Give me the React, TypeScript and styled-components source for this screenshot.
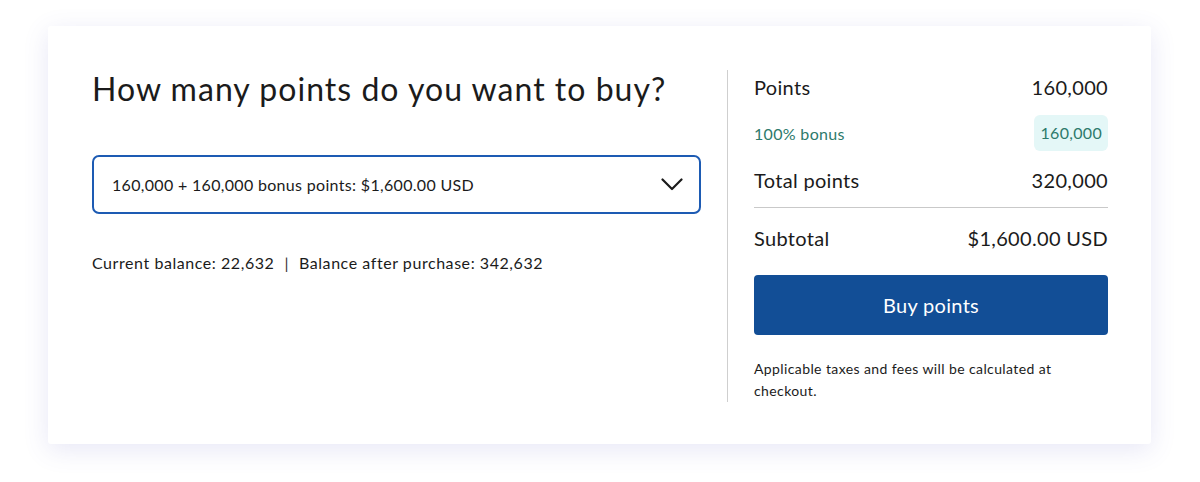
import React from "react";
import styled, { createGlobalStyle } from "styled-components";

const GlobalStyle = createGlobalStyle`
  html, body {
    margin: 0;
    padding: 0;
    background: #ffffff;
  }
  body {
    font-family: Lato, "Open Sans", "Liberation Sans", sans-serif;
    color: #1b1b1b;
    letter-spacing: 0.02em;
  }
`;

const Page = styled.div`
  padding: 26px 49px 38px 48px;
`;

const Card = styled.div`
  display: grid;
  grid-template-columns: 609px 1px 354px;
  column-gap: 26px;
  height: 331px;
  padding: 44px 43px 43px 44px;
  background: #fff;
  border-radius: 3px;
  box-shadow: 0 6px 26px rgba(88, 88, 190, 0.14);
`;

const Left = styled.div`
  display: flex;
  flex-direction: column;
`;

const Heading = styled.h1`
  margin: 0;
  font-size: 32px;
  line-height: 38px;
  font-weight: 400;
  letter-spacing: 0.032em;
  color: #1b1b1b;
`;

const Select = styled.div`
  margin-top: 47px;
  height: 59px;
  box-sizing: border-box;
  border: 2px solid #1d5bb3;
  border-radius: 7px;
  display: flex;
  align-items: center;
  justify-content: space-between;
  padding: 0 16px 0 18px;
  font-size: 16px;
`;

const Balance = styled.div`
  margin-top: 37px;
  font-size: 16px;
  line-height: 24px;
  letter-spacing: 0.035em;
  display: flex;
  gap: 10px;
`;

const Sep = styled.span`
  color: #333;
`;

const Divider = styled.div`
  background: #cfcfcf;
`;

const Right = styled.div`
  display: flex;
  flex-direction: column;
`;

const Row = styled.div<{ $h: number; $mt: number; $small?: boolean }>`
  display: flex;
  align-items: center;
  justify-content: space-between;
  height: ${(p) => p.$h}px;
  margin-top: ${(p) => p.$mt}px;
  font-size: ${(p) => (p.$small ? 16 : 20)}px;
  color: ${(p) => (p.$small ? "#2d7a6b" : "#1b1b1b")};
`;

const Badge = styled.span`
  background: #e4f7f7;
  border-radius: 6px;
  padding: 8px 6px;
  line-height: 20px;
`;

const Rule = styled.div`
  height: 1px;
  background: #c9c9c9;
  margin-top: 10px;
`;

const BuyButton = styled.button`
  margin-top: 20px;
  height: 60px;
  border: none;
  border-radius: 4px;
  background: #124e96;
  color: #fff;
  font-family: inherit;
  letter-spacing: inherit;
  font-size: 20px;
  cursor: pointer;
`;

const Note = styled.p`
  margin: 23px 0 0;
  font-size: 14px;
  line-height: 22px;
  letter-spacing: 0.028em;
  color: #1b1b1b;
`;

export default function App() {
  return (
    <>
      <GlobalStyle />
      <Page>
        <Card>
          <Left>
            <Heading>How many points do you want to buy?</Heading>
            <Select>
              <span>160,000 + 160,000 bonus points: $1,600.00 USD</span>
              <svg width="22" height="13" viewBox="0 0 22 13" fill="none">
                <path d="M1.5 1.5L11 11L20.5 1.5" stroke="#1b1b1b" strokeWidth="2.2" strokeLinecap="round" strokeLinejoin="round" />
              </svg>
            </Select>
            <Balance>
              <span>Current balance: 22,632</span>
              <Sep>|</Sep>
              <span>Balance after purchase: 342,632</span>
            </Balance>
          </Left>
          <Divider />
          <Right>
            <Row $h={34} $mt={0}>
              <span>Points</span>
              <span>160,000</span>
            </Row>
            <Row $h={36} $mt={11} $small>
              <span>100% bonus</span>
              <Badge>160,000</Badge>
            </Row>
            <Row $h={34} $mt={12}>
              <span>Total points</span>
              <span>320,000</span>
            </Row>
            <Rule />
            <Row $h={34} $mt={13}>
              <span>Subtotal</span>
              <span>$1,600.00 USD</span>
            </Row>
            <BuyButton>Buy points</BuyButton>
            <Note>Applicable taxes and fees will be calculated at checkout.</Note>
          </Right>
        </Card>
      </Page>
    </>
  );
}
